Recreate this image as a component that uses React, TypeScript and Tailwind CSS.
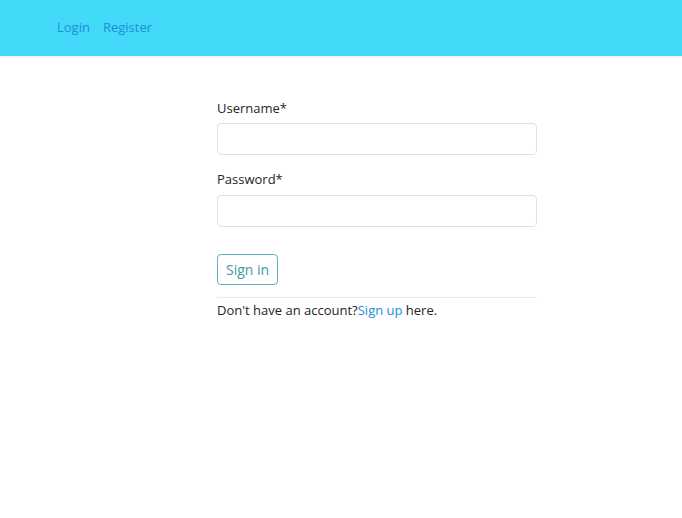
import React from 'react';

export default function App() {
  return (
    <div className="min-h-screen bg-white text-[13px] text-[#212529]" style={{ fontFamily: '"Open Sans", "Noto Sans", sans-serif' }}>
      <nav className="h-[56px] bg-[#43d9f9] flex items-center pl-[57px] gap-[13px] shadow-[0_1px_2px_rgba(0,0,0,0.08)]">
        <a href="#" className="text-[#1b8fd8]">Login</a>
        <a href="#" className="text-[#1b8fd8]">Register</a>
      </nav>

      <form className="w-[320px] ml-[217px] pt-[42px]">
        <label className="block mb-[5px] leading-[20px]">Username*</label>
        <input type="text" className="block w-full h-[32px] border border-[#dee2e6] rounded-[4px] outline-none" />
        <label className="block mt-[14px] mb-[6px] leading-[20px]">Password*</label>
        <input type="password" className="block w-full h-[32px] border border-[#dee2e6] rounded-[4px] outline-none" />
        <button type="button" className="mt-[27px] h-[31px] px-[8px] border border-[#5fb5bf] rounded-[4px] text-[#3f9aa6] text-[14px] leading-[20px]">
          Sign in
        </button>
        <hr className="mt-[12px] border-t border-[#e9ecef]" />
        <p className="mt-[2px] leading-[20px]">
          Don't have an account?<a href="#" className="text-[#1b8fd8]">Sign up</a> here.
        </p>
      </form>
    </div>
  );
}
